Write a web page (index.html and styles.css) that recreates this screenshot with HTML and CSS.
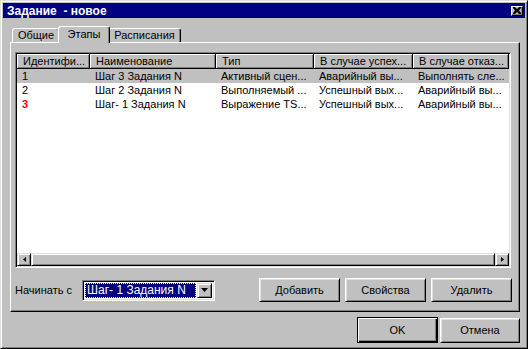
FILE: index.html
```html
<!DOCTYPE html>
<html>
  <head>
    <title>Задание - новое</title>
    <meta name="viewport" content="width=device-width, initial-scale=1" />
    <link rel="stylesheet" href="styles.css">
  </head>
  <body>
    <div class="window">
      <div class="titlebar">
        <span class="title">Задание&nbsp; - новое</span>
        <span class="close">
          <svg width="8" height="7" viewBox="0 0 8 7">
            <path d="M0 0h2l2 2 2-2h2v1l-2 2.5 2 2.5v1h-2l-2-2-2 2h-2v-1l2-2.5-2-2.5z" fill="#000" />
          </svg>
        </span>
      </div>

      <div class="client">
        <div class="tabs">
          <div class="tab tab-first">Общие</div>
          <div class="tab active">Этапы</div>
          <div class="tab tab-wide">Расписания</div>
        </div>

        <div class="panel">
          <div class="listview">
            <div class="lv-header cols">
              <div class="hcell">Идентифи...</div>
              <div class="hcell">Наименование</div>
              <div class="hcell">Тип</div>
              <div class="hcell">В случае успех...</div>
              <div class="hcell">В случае отказ...</div>
            </div>
            <div class="lv-body">
              <div class="row cols selected">
                <div>1</div>
                <div>Шаг 3 Задания N</div>
                <div>Активный сцен...</div>
                <div>Аварийный вы...</div>
                <div>Выполнять сле...</div>
              </div>
              <div class="row cols">
                <div>2</div>
                <div>Шаг 2 Задания N</div>
                <div>Выполняемый ...</div>
                <div>Успешный вых...</div>
                <div>Аварийный вы...</div>
              </div>
              <div class="row cols">
                <div class="start-mark">3</div>
                <div>Шаг- 1 Задания N</div>
                <div>Выражение TS...</div>
                <div>Успешный вых...</div>
                <div>Аварийный вы...</div>
              </div>
            </div>
            <div class="hscroll">
              <div class="sbtn">
                <svg width="3" height="5" viewBox="0 0 3 5"><path d="M3 0v5L0 2.5z" fill="#000" /></svg>
              </div>
              <div class="thumb"></div>
              <div class="sbtn">
                <svg width="3" height="5" viewBox="0 0 3 5"><path d="M0 0v5l3-2.5z" fill="#000" /></svg>
              </div>
            </div>
          </div>

          <div class="start-row">
            <label class="start-label">Начинать с</label>
            <div class="combo">
              <div class="combo-text"><span class="combo-sel">Шаг- 1 Задания N</span></div>
              <div class="combo-btn">
                <svg width="7" height="4" viewBox="0 0 7 4"><path d="M0 0h7L3.5 4z" fill="#000" /></svg>
              </div>
            </div>
            <div class="actions">
              <button class="btn" type="button">Добавить</button>
              <button class="btn" type="button">Свойства</button>
              <button class="btn" type="button">Удалить</button>
            </div>
          </div>
        </div>

        <div class="footer">
          <button class="btn btn-default" type="button">OK</button>
          <button class="btn btn-cancel" type="button">Отмена</button>
        </div>
      </div>
    </div>
  </body>
</html>
```

FILE: styles.css
```css
body {
  margin: 0;
  font-family: "Liberation Sans", Arial, sans-serif;
  font-size: 11px;
  color: #000;
  background: #c0c0c0;
}

.window {
  width: 528px;
  height: 349px;
  box-sizing: border-box;
  background: #c0c0c0;
  border: 1px solid;
  border-color: #dfdfdf #000 #000 #dfdfdf;
  box-shadow: inset 1px 1px #fff, inset -1px -1px #808080;
  padding: 2px;
  display: flex;
  flex-direction: column;
}

.titlebar {
  height: 15px;
  background: #000080;
  color: #fff;
  display: flex;
  align-items: center;
  padding-left: 4px;
}

.title {
  font-weight: bold;
  font-size: 12px;
  flex: 1;
  white-space: pre;
}

.close {
  width: 12px;
  height: 10px;
  box-sizing: border-box;
  margin-right: 2px;
  background: #c0c0c0;
  border: 1px solid;
  border-color: #fff #000 #000 #fff;
  box-shadow: inset -1px -1px #808080;
  display: flex;
  align-items: center;
  justify-content: center;
}

.close svg {
  display: block;
  margin: 0 1px 1px 0;
}

.client {
  padding: 8px 5px 0 7px;
}

/* tabs */
.tabs {
  display: flex;
  align-items: flex-end;
  height: 16px;
  padding-left: 2px;
}

.tab {
  height: 14px;
  box-sizing: border-box;
  border-top: 1px solid #fff;
  border-left: 1px solid #fff;
  border-right: 1px solid #000;
  box-shadow: inset -1px 0 #808080;
  border-radius: 3px 3px 0 0;
  background: #c0c0c0;
  text-align: center;
  line-height: 13px;
}

.tab-first {
  width: 48px;
}

.tab-wide {
  width: 73px;
}

.tab.active {
  position: relative;
  z-index: 1;
  width: 52px;
  height: 17px;
  margin: 0 -2px -1px;
  line-height: 14px;
}

.panel {
  height: 270px;
  box-sizing: border-box;
  border: 1px solid;
  border-color: #fff #000 #000 #fff;
  box-shadow: inset -1px -1px #808080;
  padding: 9px 8px 0 4px;
}

/* list view */
.listview {
  height: 216px;
  box-sizing: border-box;
  border: 1px solid;
  border-color: #808080 #fff #fff #808080;
  box-shadow: inset 1px 1px #000, inset -1px -1px #dfdfdf;
  background: #fff;
  padding: 1px;
  display: flex;
  flex-direction: column;
}

.cols {
  display: grid;
  grid-template-columns: 73px 126px 98px 99px 96px;
}

.lv-header {
  height: 15px;
}

.hcell {
  box-sizing: border-box;
  background: #c0c0c0;
  border-right: 1px solid #000;
  border-bottom: 1px solid #000;
  box-shadow: inset 1px 1px #fff, inset -1px -1px #808080;
  padding-left: 6px;
  line-height: 14px;
  white-space: nowrap;
  overflow: hidden;
}

.lv-body {
  flex: 1;
}

.row {
  height: 14px;
  line-height: 14px;
}

.row > div {
  padding-left: 5px;
  white-space: nowrap;
  overflow: hidden;
}

.row.selected {
  background: #c0c0c0;
}

.start-mark {
  color: #ff0000;
  font-weight: bold;
}

.hscroll {
  height: 13px;
  display: flex;
  background: #c0c0c0;
}

.sbtn,
.thumb {
  box-sizing: border-box;
  background: #c0c0c0;
  border: 1px solid;
  border-color: #dfdfdf #000 #000 #dfdfdf;
  box-shadow: inset 1px 1px #fff, inset -1px -1px #808080;
}

.sbtn {
  width: 14px;
  display: flex;
  align-items: center;
  justify-content: center;
}

.sbtn svg {
  display: block;
}

.thumb {
  flex: 1;
}

/* bottom row */
.start-row {
  display: flex;
  align-items: center;
  margin-top: 10px;
  margin-right: -1px;
  height: 24px;
}

.start-label {
  width: 67px;
}

.combo {
  width: 133px;
  height: 21px;
  box-sizing: border-box;
  border: 1px solid;
  border-color: #808080 #fff #fff #808080;
  box-shadow: inset 1px 1px #000, inset -1px -1px #dfdfdf;
  background: #fff;
  padding: 2px;
  display: flex;
}

.combo-text {
  flex: 1;
  padding-right: 1px;
  display: flex;
}

.combo-sel {
  flex: 1;
  background: #000080;
  color: #fff;
  outline: 1px dotted #ffff80;
  outline-offset: -1px;
  padding-left: 2px;
  line-height: 15px;
  font-size: 12px;
  white-space: nowrap;
}

.combo-btn {
  width: 15px;
  box-sizing: border-box;
  background: #c0c0c0;
  border: 1px solid;
  border-color: #dfdfdf #000 #000 #dfdfdf;
  box-shadow: inset 1px 1px #fff, inset -1px -1px #808080;
  display: flex;
  align-items: center;
  justify-content: center;
}

.combo-btn svg {
  display: block;
}

.actions {
  margin-left: auto;
  display: flex;
  gap: 5px;
}

.btn {
  width: 81px;
  height: 24px;
  box-sizing: border-box;
  font-family: "Liberation Sans", Arial, sans-serif;
  font-size: 11px;
  color: #000;
  background: #c0c0c0;
  border: 1px solid;
  border-color: #fff #000 #000 #fff;
  box-shadow: inset 1px 1px #dfdfdf, inset -1px -1px #808080;
  padding: 0;
}

.footer {
  display: flex;
  justify-content: flex-end;
  align-items: center;
  gap: 2px;
  margin-top: 5px;
}

.btn-default {
  height: 26px;
  border-color: #000;
  box-shadow: inset 1px 1px #fff, inset -1px -1px #000, inset -2px -2px #808080;
}

.btn-cancel {
  width: 80px;
  height: 25px;
}
```
